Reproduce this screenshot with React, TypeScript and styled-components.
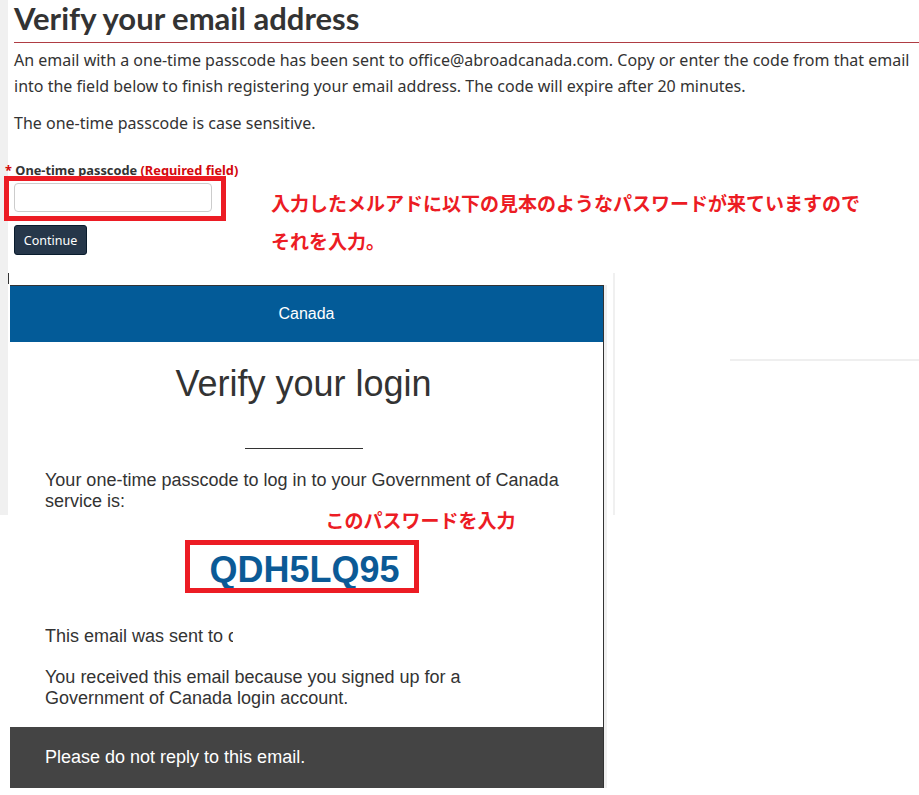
import React from "react";
import styled, { createGlobalStyle } from "styled-components";

const GlobalStyle = createGlobalStyle`
  html, body {
    margin: 0;
    padding: 0;
    background: #fff;
  }
  body {
    width: 919px;
    height: 795px;
    overflow: hidden;
  }
`;

const Page = styled.div`
  width: 919px;
  height: 795px;
  overflow: hidden;
  background: #fff;
`;

/* ---------- top: the site form ---------- */

const TopSection = styled.section`
  height: 273px;
  box-sizing: border-box;
  border-left: 8px solid #f0f0f0;
  padding-left: 6px;
  font-family: "Noto Sans", sans-serif;
  color: #333;
`;

const Heading = styled.h1`
  margin: 0;
  font-family: Lato, sans-serif;
  font-weight: 700;
  font-size: 31px;
  line-height: 36px;
  padding-bottom: 6px;
  border-bottom: 1px solid #af3c43;
`;

const Para = styled.p<{ $gap?: number }>`
  margin: ${(p) => p.$gap ?? 4}px 0 0;
  font-size: 16px;
  line-height: 26px;
`;

const FormRow = styled.div`
  display: flex;
  align-items: flex-start;
  margin-top: 26px;
`;

const Field = styled.div`
  display: flex;
  flex-direction: column;
  width: 198px;
`;

const Label = styled.label`
  margin-left: -9px;
  font-size: 12.8px;
  line-height: 16px;
  font-weight: 700;
  white-space: nowrap;
`;

const Red = styled.span`
  color: #d3080c;
`;

const InputWrap = styled.div`
  position: relative;
  margin-top: 5px;
`;

const Input = styled.input`
  display: block;
  box-sizing: border-box;
  width: 198px;
  height: 29px;
  border: 1px solid #ccc;
  border-radius: 4px;
  background: #fff;
`;

const Highlight = styled.div<{ $t: number; $r: number; $b: number; $l: number }>`
  position: absolute;
  top: -${(p) => p.$t}px;
  right: -${(p) => p.$r}px;
  bottom: -${(p) => p.$b}px;
  left: -${(p) => p.$l}px;
  border: 5px solid #ec1c24;
  pointer-events: none;
`;

const Button = styled.button`
  align-self: flex-start;
  margin-top: 13px;
  width: 73px;
  height: 30px;
  padding: 0;
  border: 1px solid #091c2d;
  border-radius: 3px;
  background: #26374a;
  color: #fff;
  font-family: "Noto Sans", sans-serif;
  font-size: 12.5px;
`;

const Note = styled.div<{ $size?: number }>`
  font-family: "Noto Sans CJK JP", sans-serif;
  font-weight: 700;
  font-size: ${(p) => p.$size ?? 19}px;
  line-height: 38px;
  color: #ec1c24;
  white-space: nowrap;
`;

const NoteBlock = styled(Note)`
  margin: 22px 0 0 59px;
`;

/* ---------- bottom: the email screenshot ---------- */

const Composite = styled.div`
  display: flex;
  align-items: flex-start;
`;

const LeftGutter = styled.div`
  display: flex;
  width: 10px;
  flex: none;
`;

const Rail = styled.div<{ $w: number }>`
  width: ${(p) => p.$w}px;
  height: 242px;
  background: #f0f0f0;
  flex: none;
`;

const Caret = styled.div`
  width: 1px;
  height: 11px;
  background: #333;
`;

const Email = styled.div`
  width: 594px;
  flex: none;
  margin-top: 12px;
  box-sizing: border-box;
  border-top: 1px solid #333;
  border-right: 1px solid #333;
  box-shadow: 3px 0 0 #efefef;
  font-family: "Liberation Sans", Arial, sans-serif;
  color: #333;
  background: #fff;
`;

const EmailHeader = styled.div`
  height: 56px;
  background: #035b98;
  color: #fff;
  font-size: 16px;
  display: flex;
  align-items: center;
  justify-content: center;
`;

const EmailBody = styled.div`
  width: 517px;
  padding-left: 35px;
  display: flex;
  flex-direction: column;
`;

const EmailTitle = styled.h2`
  margin: 23px 0 0;
  text-align: center;
  font-weight: 400;
  font-size: 36px;
  line-height: 38px;
  white-space: nowrap;
`;

const ShortRule = styled.hr`
  align-self: center;
  width: 118px;
  margin: 45px 0 0;
  border: 0;
  border-top: 1px solid #333;
`;

const EmailText = styled.p<{ $gap: number }>`
  margin: ${(p) => p.$gap}px 0 0;
  font-size: 18px;
  line-height: 21px;
`;

const Clip = styled.span`
  display: inline-block;
  width: 188px;
  overflow: hidden;
  white-space: nowrap;
  vertical-align: top;
`;

const CodeArea = styled.div`
  position: relative;
  align-self: center;
  margin: 28px 0 0 -3px;
`;

const Code = styled.div`
  padding: 9px 19px 3px 24px;
  font-size: 36px;
  line-height: 41px;
  font-weight: 700;
  color: #0b5a96;
`;

const FloatNote = styled(Note)`
  position: absolute;
  left: 140px;
  top: -30px;
  line-height: 20px;
`;

const EmailFooter = styled.div`
  margin-top: 18px;
  height: 61px;
  padding-left: 35px;
  display: flex;
  align-items: center;
  background: #444;
  color: #fff;
  font-size: 18px;
`;

const RightGutter = styled.div`
  flex: 1;
  display: flex;
  align-items: flex-start;
  padding-left: 9px;
`;

const FaintLine = styled.div`
  flex: 1;
  height: 2px;
  margin: 86px 0 0 115px;
  background: #efefef;
`;

export default function App() {
  return (
    <Page>
      <GlobalStyle />
      <TopSection>
        <Heading>Verify your email address</Heading>
        <Para>
          An email with a one-time passcode has been sent to office@abroadcanada.com. Copy or enter the code
          from that email into the field below to finish registering your email address. The code will
          expire after 20 minutes.
        </Para>
        <Para $gap={11}>The one-time passcode is case sensitive.</Para>
        <FormRow>
          <Field>
            <Label htmlFor="otp">
              <Red>*</Red> One-time passcode <Red>(Required field)</Red>
            </Label>
            <InputWrap>
              <Input id="otp" type="text" />
              <Highlight $t={7} $r={14} $b={9} $l={10} />
            </InputWrap>
            <Button type="button">Continue</Button>
          </Field>
          <NoteBlock>
            入力したメルアドに以下の見本のようなパスワードが来ていますので
            <br />
            それを入力。
          </NoteBlock>
        </FormRow>
      </TopSection>

      <Composite>
        <LeftGutter>
          <Rail $w={8} />
          <Caret />
        </LeftGutter>
        <Email>
          <EmailHeader>Canada</EmailHeader>
          <EmailBody>
            <EmailTitle>Verify your login</EmailTitle>
            <ShortRule />
            <EmailText $gap={21}>
              Your one-time passcode to log in to your Government of Canada service is:
            </EmailText>
            <CodeArea>
              <FloatNote>このパスワードを入力</FloatNote>
              <Code>QDH5LQ95</Code>
              <Highlight $t={0} $r={0} $b={0} $l={0} />
            </CodeArea>
            <EmailText $gap={33}>
              <Clip>This email was sent to office@abroadcanada.com</Clip>
            </EmailText>
            <EmailText $gap={20}>
              You received this email because you signed up for a Government of Canada login account.
            </EmailText>
          </EmailBody>
          <EmailFooter>Please do not reply to this email.</EmailFooter>
        </Email>
        <RightGutter>
          <Rail $w={2} />
          <FaintLine />
        </RightGutter>
      </Composite>
    </Page>
  );
}
